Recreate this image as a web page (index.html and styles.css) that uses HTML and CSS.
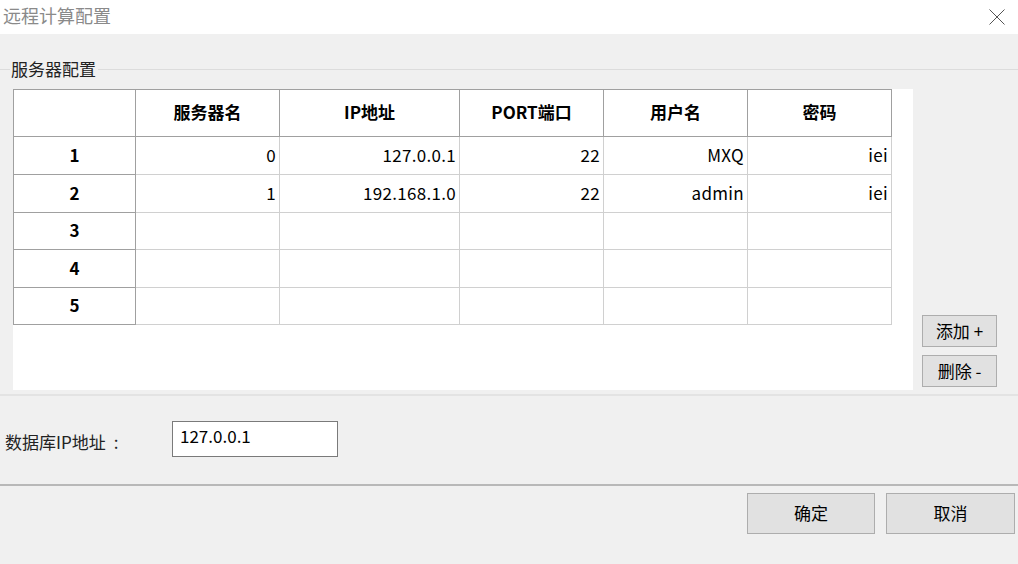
FILE: index.html
```html
<!DOCTYPE html>
<html>
<head>
<meta charset="utf-8">
<link rel="stylesheet" href="styles.css">
</head>
<body>
<div class="window">
  <div class="titlebar">
    <span class="title">远程计算配置</span>
    <svg class="close" width="16" height="16" viewBox="0 0 16 16"><path d="M0.5 0.5 L15.5 15.5 M15.5 0.5 L0.5 15.5" stroke="#555" stroke-width="1" fill="none"/></svg>
  </div>
  <div class="content">
    <div class="group">
      <div class="group-head"><span class="group-line-left"></span><span class="group-label">服务器配置</span><span class="group-line"></span></div>
      <div class="group-body">
        <div class="table-area">
          <table class="grid">
            <colgroup><col class="c0"><col class="c1"><col class="c2"><col class="c3"><col class="c4"><col class="c5"></colgroup>
            <thead>
              <tr class="hrow"><th class="corner"></th><th>服务器名</th><th>IP地址</th><th>PORT端口</th><th>用户名</th><th>密码</th></tr>
            </thead>
            <tbody>
              <tr class="r38"><th>1</th><td>0</td><td>127.0.0.1</td><td>22</td><td>MXQ</td><td>iei</td></tr>
              <tr class="r38"><th>2</th><td>1</td><td>192.168.1.0</td><td>22</td><td>admin</td><td>iei</td></tr>
              <tr class="r37"><th>3</th><td></td><td></td><td></td><td></td><td></td></tr>
              <tr class="r38"><th>4</th><td></td><td></td><td></td><td></td><td></td></tr>
              <tr class="r37"><th>5</th><td></td><td></td><td></td><td></td><td></td></tr>
            </tbody>
          </table>
        </div>
        <div class="side-buttons">
          <button class="btn small">添加 +</button>
          <button class="btn small">删除 -</button>
        </div>
      </div>
    </div>
    <div class="sep-light"></div>
    <div class="db-row">
      <span class="db-label">数据库IP地址<span class="colon">:</span></span>
      <div class="input">127.0.0.1</div>
    </div>
    <div class="sep-dark"></div>
    <div class="footer">
      <button class="btn big ok">确定</button>
      <button class="btn big">取消</button>
    </div>
  </div>
</div>
</body>
</html>
```
FILE: styles.css
```css
* { box-sizing: border-box; }
html, body { margin: 0; padding: 0; }
body {
  width: 1018px;
  height: 564px;
  overflow: hidden;
  background: #f0f0f0;
  font-family: "Noto Sans CJK SC", "Noto Sans", sans-serif;
  color: #000;
}
.window { width: 1018px; height: 564px; display: flex; flex-direction: column; }
.titlebar {
  height: 34px;
  background: #fff;
  display: flex;
  align-items: center;
  justify-content: space-between;
  padding: 0 13px 5px 3px;
}
.title { font-size: 18px; color: #8a8a8a; line-height: 20px; }
.close { display: block; margin-top: 4px; }
.content { flex: 1; display: flex; flex-direction: column; }
.group { padding-top: 26px; }
.group-head { display: flex; align-items: center; height: 18px; }
.group-line-left { width: 10px; height: 1px; background: #dcdcdc; }
.group-label { font-size: 17px; line-height: 18px; color: #222; padding: 0 2px 0 1px; }
.group-line { flex: 1; height: 1px; background: #dcdcdc; }
.group-body { display: flex; align-items: flex-end; padding-left: 13px; margin-top: 11px; }
.table-area { width: 900px; height: 301px; background: #fff; }
.grid {
  border-collapse: collapse;
  table-layout: fixed;
  width: 878px;
  font-size: 17px;
}
.c0 { width: 122px; }
.c1 { width: 144px; }
.c2 { width: 180px; }
.c3 { width: 144px; }
.c4 { width: 144px; }
.c5 { width: 144px; }
.grid th, .grid td { padding: 0 3px 0 0; line-height: 20px; }
.grid thead th { border: 1px solid #a0a0a0; font-weight: bold; text-align: center; height: 47px; padding: 0 0 2px 0; }
.grid tbody th { border: 1px solid #a0a0a0; font-weight: bold; text-align: center; padding: 0 0 2px 0; }
.grid td { border: 1px solid #d0d0d0; text-align: right; padding-bottom: 2px; letter-spacing: 0.3px; }
.grid thead th + th { border-left-color: #c8c8c8; }
.r38 { height: 38px; }
.r37 { height: 37px; }
.side-buttons { display: flex; flex-direction: column; gap: 8px; margin-left: 9px; margin-bottom: 3px; }
.btn {
  font-family: "Noto Sans CJK SC", "Noto Sans", sans-serif;
  background: #e1e1e1;
  border: 1px solid #adadad;
  color: #000;
  padding: 0;
  margin: 0;
}
.btn.small { width: 75px; height: 32px; font-size: 17px; padding-bottom: 2px; }
.sep-light { height: 2px; background: #e3e3e3; margin-top: 4px; }
.db-row { display: flex; align-items: center; height: 89px; padding: 0 0 3px 5px; }
.db-label { font-size: 17px; width: 167px; color: #222; padding-top: 5px; }
.colon { margin-left: 8px; }
.input {
  width: 166px;
  height: 36px;
  border: 1px solid #7a7a7a;
  background: #fff;
  font-size: 17px;
  padding: 4px 0 0 7px;
  line-height: 20px;
}
.sep-dark { height: 2px; background: #b8b8b8; margin-top: -1px; }
.footer { display: flex; justify-content: flex-end; gap: 11px; padding: 7px 3px 0 0; }
.btn.big { width: 129px; height: 41px; font-size: 17px; padding-bottom: 2px; }
.btn.ok { width: 128px; }
```
